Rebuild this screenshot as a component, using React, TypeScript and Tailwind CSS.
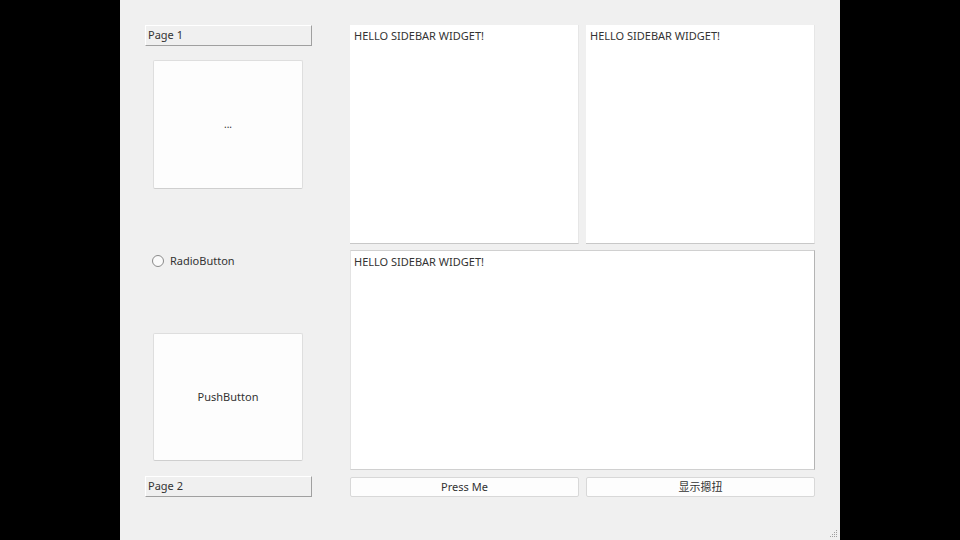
import React from "react";

// Qt-style toolbox window, centred on a black backdrop

const FONT = {
  fontFamily: '"Noto Sans", "Noto Sans CJK SC", sans-serif',
};

function PageTab({ label }: { label: string }) {
  return (
    <div className="flex h-[21px] items-center border-t border-l border-t-white border-l-white border-b border-r border-b-[#a0a0a0] border-r-[#a0a0a0] bg-[#f0f0f0] pl-[2px] text-[11px] text-[#333333]">
      {label}
    </div>
  );
}

function TextPanel({ className = "" }: { className?: string }) {
  return (
    <div
      className={`bg-white pt-[3px] text-[11px] leading-[16px] text-[#333333] ${className}`}
    >
      HELLO SIDEBAR WIDGET!
    </div>
  );
}

function FlatButton({ label }: { label: string }) {
  return (
    <div className="flex h-[20px] items-center justify-center rounded-[2px] border border-[#d8d8d8] bg-[#fdfdfd] text-[11px] text-[#333333]">
      {label}
    </div>
  );
}

export default function App() {
  return (
    <div className="flex h-[540px] w-full justify-center bg-black" style={FONT}>
      <div className="relative flex h-[540px] w-[720px] gap-[38px] bg-[#f0f0f0] px-[25px] pt-[25px]">
        {/* left toolbox column */}
        <div className="flex w-[167px] flex-col">
          <PageTab label="Page 1" />
          <div className="ml-[8px] mt-[14px] flex h-[129px] w-[150px] items-center justify-center rounded-[2px] border border-[#dedede] border-b-[#cfcfcf] bg-[#fdfdfd] text-[10px] text-[#333333]">
            ...
          </div>
          <div className="mt-[64px] flex h-[16px] items-center gap-[6px] pl-[7px] text-[11px] text-[#333333]">
            <span className="h-[12px] w-[12px] rounded-full border border-[#8a8a8a] bg-[#fafafa]" />
            RadioButton
          </div>
          <div className="ml-[8px] mt-[64px] flex h-[128px] w-[150px] items-center justify-center rounded-[2px] border border-[#dedede] border-b-[#cfcfcf] bg-[#fdfdfd] text-[11px] text-[#333333]">
            PushButton
          </div>
          <div className="mt-[15px]">
            <PageTab label="Page 2" />
          </div>
        </div>

        {/* right content column */}
        <div className="flex w-[465px] flex-col">
          <div className="grid grid-cols-2 gap-[7px]">
            <TextPanel className="h-[219px] border-b border-r border-b-[#c8c8c8] border-r-[#e6e6e6] px-[4px]" />
            <TextPanel className="h-[219px] border-b border-r border-b-[#c8c8c8] border-r-[#e6e6e6] px-[4px]" />
          </div>
          <TextPanel className="mt-[6px] h-[220px] border border-[#d0d0d0] border-l-[#e3e3e3] border-r-[#b4b4b4] px-[3px]" />
          <div className="mt-[7px] grid grid-cols-2 gap-[7px]">
            <FlatButton label="Press Me" />
            <FlatButton label="显示摁扭" />
          </div>
        </div>

        {/* size grip */}
        <svg
          className="absolute bottom-[2px] right-[2px]"
          width="8"
          height="8"
          viewBox="0 0 8 8"
        >
          {[
            [6, 0],
            [6, 2],
            [4, 2],
            [6, 4],
            [4, 4],
            [2, 4],
            [6, 6],
            [4, 6],
            [2, 6],
            [0, 6],
          ].map(([x, y]) => (
            <rect key={`${x}-${y}`} x={x} y={y} width="1" height="1" fill="#a0a0a0" />
          ))}
        </svg>
      </div>
    </div>
  );
}
